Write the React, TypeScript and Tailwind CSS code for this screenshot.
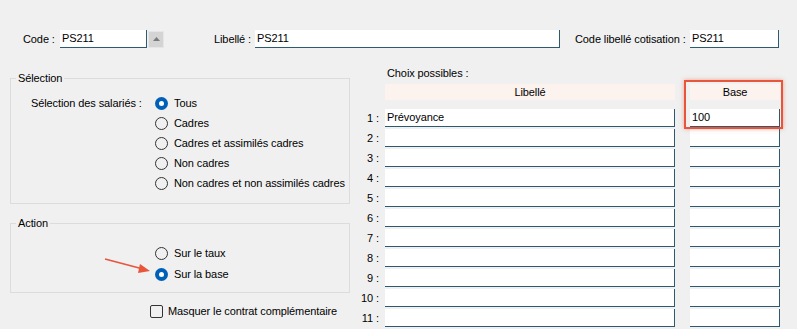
import type { ReactNode } from "react";

const rows = Array.from({ length: 11 }, (_, i) => i + 1);

function Field({ value, className }: { value?: string; className: string }) {
  return (
    <div
      className={`shrink-0 h-[18px] bg-white border-r border-b border-[#2d5a6e] pl-[2px] leading-[17px] whitespace-nowrap ${className}`}
    >
      {value}
    </div>
  );
}

function Radio({ label, checked }: { label: string; checked?: boolean }) {
  return (
    <div className="flex items-center h-full whitespace-nowrap">
      {checked ? (
        <span className="shrink-0 w-[13px] h-[13px] rounded-full bg-[#005fb8] flex items-center justify-center">
          <span className="w-[5px] h-[5px] rounded-full bg-white" />
        </span>
      ) : (
        <span className="shrink-0 w-[13px] h-[13px] rounded-full border border-[#333]" />
      )}
      <span className="ml-[6px]">{label}</span>
    </div>
  );
}

function Group({ title, children, className }: { title: string; children: ReactNode; className: string }) {
  return (
    <fieldset className={`border border-[#dcdcdc] px-0 mx-0 ${className}`}>
      <legend className="ml-[5px] px-[2px] leading-[16px]">{title}</legend>
      {children}
    </fieldset>
  );
}

export default function App() {
  return (
    <div
      className="relative w-[797px] h-[329px] overflow-hidden bg-[#f0f0f0] text-[11px] tracking-[-0.1px] text-black pt-[30px] whitespace-nowrap"
      style={{ fontFamily: '"Liberation Sans", Arial, sans-serif' }}
    >
      {/* top row */}
      <div className="flex items-center h-[18px]">
        <span className="shrink-0 ml-[23px] w-[37px]">Code :</span>
        <Field value="PS211" className="w-[87px]" />
        <button
          type="button"
          className="shrink-0 ml-[1px] w-[16px] h-[17px] bg-[#d4d4d4] border border-[#e6e6e6] flex items-center justify-center"
        >
          <svg width="7" height="4" viewBox="0 0 7 4">
            <path d="M0 4 L3.5 0 L7 4 Z" fill="#7a7a7a" />
          </svg>
        </button>
        <span className="shrink-0 ml-[50px] w-[41px]">Libellé :</span>
        <Field value="PS211" className="w-[305px]" />
        <span className="shrink-0 ml-[15px] w-[115px]">Code libellé cotisation :</span>
        <Field value="PS211" className="w-[89px]" />
      </div>

      <div className="flex mt-[17px]">
        {/* left column */}
        <div className="shrink-0 ml-[10px] w-[340px] flex flex-col">
          <Group title="Sélection" className="h-[134px] mt-[5px]">
            <div className="flex pt-[7px]">
              <span className="shrink-0 ml-[20px] w-[124px] h-[20px] flex items-center">Sélection des salariés :</span>
              <div className="flex flex-col">
                {["Tous", "Cadres", "Cadres et assimilés cadres", "Non cadres", "Non cadres et non assimilés cadres"].map(
                  (l, i) => (
                    <div key={l} className="h-[20px]">
                      <Radio label={l} checked={i === 0} />
                    </div>
                  )
                )}
              </div>
            </div>
          </Group>
          <Group title="Action" className="h-[78px] mt-[11px]">
            <div className="flex flex-col pt-[12px] pl-[144px]">
              <div className="h-[21px]">
                <Radio label="Sur le taux" />
              </div>
              <div className="h-[21px]">
                <Radio label="Sur la base" checked />
              </div>
            </div>
          </Group>
          <div className="flex items-center h-[20px] mt-[8px] pl-[140px]">
            <span className="shrink-0 w-[13px] h-[13px] rounded-[2px] border border-[#333]" />
            <span className="ml-[5px]">Masquer le contrat complémentaire</span>
          </div>
        </div>

        {/* right column */}
        <div className="relative ml-[6px] flex flex-col">
          <div className="h-[16px] leading-[16px] pl-[31px]">Choix possibles :</div>
          <div className="flex mt-[3px] h-[16px] leading-[16px]">
            <div className="ml-[29px] w-[290px] bg-[#fcf2ee] text-center">Libellé</div>
            <div className="ml-[15px] w-[90px] bg-[#fcf2ee] text-center">Base</div>
          </div>
          <div className="flex flex-col mt-[9px] gap-[2px]">
            {rows.map((n) => (
              <div key={n} className="flex items-center h-[18px]">
                <span className="shrink-0 w-[24px] text-right pr-[1px]">{n} :</span>
                <Field value={n === 1 ? "Prévoyance" : ""} className="ml-[5px] w-[290px]" />
                <Field value={n === 1 ? "100" : ""} className="ml-[15px] w-[90px]" />
              </div>
            ))}
          </div>
          <div className="absolute left-[328px] top-[15px] w-[99px] h-[49px] border-2 border-[#e8553b] shadow-[0_0_4px_rgba(232,85,59,0.5)]" />
        </div>
      </div>

      <svg className="absolute left-[100px] top-[253px]" width="60" height="25" viewBox="0 0 60 25">
        <line x1="5" y1="6" x2="43" y2="16" stroke="#e8553b" strokeWidth="1.6" />
        <path d="M50 18 L40 11 L38 20 Z" fill="#e8553b" />
      </svg>
    </div>
  );
}
